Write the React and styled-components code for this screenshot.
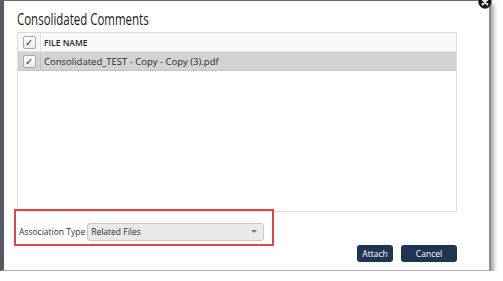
import styled, { createGlobalStyle } from "styled-components";

const Global = createGlobalStyle`
  html, body {
    margin: 0;
    background: #ffffff;
    font-family: "Open Sans", "Noto Sans", sans-serif;
  }
`;

const Frame = styled.div`
  position: relative;
  box-sizing: border-box;
  width: 491px;
  height: 271px;
  background: #ffffff;
  border-left: 4px solid #555b66;
  border-top: 1px solid #646a76;
  border-right: 2px solid #8c8c8c;
  border-bottom: 1px solid #b0b0b0;
  box-shadow: 3px 4px 4px rgba(0, 0, 0, 0.35);
  padding: 7px 0 0 13px;
`;
const Close = styled.svg`
  position: absolute;
  top: -6px;
  right: -3px;
  width: 14px;
  height: 14px;
`;
const Title = styled.h1`
  margin: 0;
  font-size: 15.5px;
  font-weight: 500;
  line-height: 22px;
  color: #1a1a1a;
  height: 24px;
  white-space: nowrap;
  transform: scaleX(0.74);
  transform-origin: left center;
`;
const Table = styled.div`
  box-sizing: border-box;
  width: 440px;
  height: 180px;
  border: 1px solid #dcdcdc;
  display: flex;
  flex-direction: column;
`;
const Row = styled.div`
  display: grid;
  grid-template-columns: 23px 1fr;
  height: 18px;
  background: ${(p) => (p.$head ? "#f8f8f8" : "#d3d3d3")};
  border-bottom: 1px solid ${(p) => (p.$head ? "#e2e2e2" : "#c4c4c4")};
`;
const CheckCell = styled.div`
  display: flex;
  align-items: center;
  justify-content: center;
  border-right: 1px solid ${(p) => (p.$head ? "#dedede" : "#c2c2c2")};
`;
const Check = styled.div`
  box-sizing: border-box;
  width: 13px;
  height: 13px;
  border: 1px solid #a9a9a9;
  border-radius: 2px;
  background: linear-gradient(#ffffff, #ececec);
  color: #333;
  font-size: 10px;
  line-height: 11px;
  text-align: center;
`;
const Cell = styled.div`
  display: flex;
  align-items: center;
  padding-left: 3px;
  font-size: ${(p) => (p.$head ? "8.5px" : "9.5px")};
  font-weight: ${(p) => (p.$head ? 600 : 400)};
  color: #2a2a2a;
  white-space: nowrap;
`;
const Assoc = styled.div`
  box-sizing: border-box;
  display: flex;
  align-items: center;
  gap: 2px;
  width: 260px;
  height: 37px;
  margin: -3px 0 0 -3px;
  padding: 8px 0 0 3px;
  border: 2px solid #d8494a;
  font-size: 8.5px;
  color: #333;
`;
const Select = styled.div`
  box-sizing: border-box;
  display: flex;
  align-items: center;
  justify-content: space-between;
  width: 177px;
  height: 18px;
  padding: 0 6px 0 3px;
  background: #e9e9e9;
  border: 1px solid #c9c9c9;
  border-radius: 3px;
  font-size: 8.5px;
  color: #2a2a2a;
`;
const Arrow = styled.span`
  width: 0;
  height: 0;
  border-left: 3px solid transparent;
  border-right: 3px solid transparent;
  border-top: 3px solid #777;
`;
const Buttons = styled.div`
  display: flex;
  justify-content: flex-end;
  gap: 8px;
  width: 440px;
  margin-top: -1px;
`;
const Button = styled.button`
  box-sizing: border-box;
  width: ${(p) => p.$w}px;
  height: 17px;
  padding: 0;
  border: none;
  border-radius: 3px;
  background: #1e3553;
  color: #fff;
  font-family: "Open Sans", sans-serif;
  font-size: 8.5px;
`;

export default function App() {
  return (
    <>
      <Global />
      <Frame>
        <Close viewBox="0 0 14 14">
          <circle cx="7" cy="7" r="6.5" fill="#111" stroke="#555" strokeWidth="0.5" />
          <path d="M4.5 4.5 L9.5 9.5 M9.5 4.5 L4.5 9.5" stroke="#fff" strokeWidth="1.8" strokeLinecap="round" />
        </Close>
        <Title>Consolidated Comments</Title>
        <Table>
          <Row $head>
            <CheckCell $head>
              <Check>✓</Check>
            </CheckCell>
            <Cell $head>FILE NAME</Cell>
          </Row>
          <Row>
            <CheckCell>
              <Check>✓</Check>
            </CheckCell>
            <Cell>Consolidated_TEST - Copy - Copy (3).pdf</Cell>
          </Row>
        </Table>
        <Assoc>
          Association Type
          <Select>
            Related Files
            <Arrow />
          </Select>
        </Assoc>
        <Buttons>
          <Button $w={36}>Attach</Button>
          <Button $w={56}>Cancel</Button>
        </Buttons>
      </Frame>
    </>
  );
}
